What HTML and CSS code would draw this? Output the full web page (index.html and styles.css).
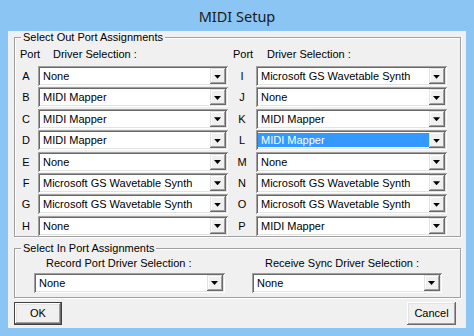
FILE: index.html
```html
<!DOCTYPE html>
<html lang="en">
<head>
  <meta charset="UTF-8" />
  <title>MIDI Setup</title>
  <link rel="stylesheet" href="styles.css">
</head>
<body>

  <div class="window">
    <div class="titlebar">MIDI Setup</div>

    <div class="client">

      <div class="group out-group">
        <span class="legend">Select Out Port Assignments</span>
        <div class="port-grid">
          <div class="head head-left"><span class="port-lbl">Port</span>Driver Selection :</div>
          <div class="head head-right"><span class="port-lbl">Port</span>Driver Selection :</div>

          <div class="letter">A</div>
          <div class="combo"><span class="value">None</span><span class="drop"><i></i></span></div>
          <div class="letter right">I</div>
          <div class="combo"><span class="value">Microsoft GS Wavetable Synth</span><span class="drop"><i></i></span></div>

          <div class="letter">B</div>
          <div class="combo"><span class="value">MIDI Mapper</span><span class="drop"><i></i></span></div>
          <div class="letter right">J</div>
          <div class="combo"><span class="value">None</span><span class="drop"><i></i></span></div>

          <div class="letter">C</div>
          <div class="combo"><span class="value">MIDI Mapper</span><span class="drop"><i></i></span></div>
          <div class="letter right">K</div>
          <div class="combo"><span class="value">MIDI Mapper</span><span class="drop"><i></i></span></div>

          <div class="letter">D</div>
          <div class="combo"><span class="value">MIDI Mapper</span><span class="drop"><i></i></span></div>
          <div class="letter right">L</div>
          <div class="combo focused"><span class="value">MIDI Mapper</span><span class="drop"><i></i></span></div>

          <div class="letter">E</div>
          <div class="combo"><span class="value">None</span><span class="drop"><i></i></span></div>
          <div class="letter right">M</div>
          <div class="combo"><span class="value">None</span><span class="drop"><i></i></span></div>

          <div class="letter">F</div>
          <div class="combo"><span class="value">Microsoft GS Wavetable Synth</span><span class="drop"><i></i></span></div>
          <div class="letter right">N</div>
          <div class="combo"><span class="value">Microsoft GS Wavetable Synth</span><span class="drop"><i></i></span></div>

          <div class="letter">G</div>
          <div class="combo"><span class="value">Microsoft GS Wavetable Synth</span><span class="drop"><i></i></span></div>
          <div class="letter right">O</div>
          <div class="combo"><span class="value">Microsoft GS Wavetable Synth</span><span class="drop"><i></i></span></div>

          <div class="letter">H</div>
          <div class="combo"><span class="value">None</span><span class="drop"><i></i></span></div>
          <div class="letter right">P</div>
          <div class="combo"><span class="value">MIDI Mapper</span><span class="drop"><i></i></span></div>
        </div>
      </div>

      <div class="group in-group">
        <span class="legend">Select In Port Assignments</span>
        <div class="in-grid">
          <div class="in-col">
            <div class="in-label">Record Port Driver Selection :</div>
            <div class="combo"><span class="value">None</span><span class="drop"><i></i></span></div>
          </div>
          <div class="in-col">
            <div class="in-label in-label-right">Receive Sync Driver Selection :</div>
            <div class="combo"><span class="value">None</span><span class="drop"><i></i></span></div>
          </div>
        </div>
      </div>

      <div class="actions">
        <button class="btn default">OK</button>
        <button class="btn cancel">Cancel</button>
      </div>

    </div>
  </div>

</body>
</html>
```

FILE: styles.css
```css
body {
  margin: 0;
  background: #8bc5f4;
  font-family: "Liberation Sans", Arial, sans-serif;
  font-size: 11px;
  color: #000;
}

.window {
  width: 474px;
  height: 336px;
  background: #8bc5f4;
}

.titlebar {
  height: 31px;
  line-height: 32px;
  text-align: center;
  font-family: "Noto Sans", "Open Sans", sans-serif;
  font-size: 14.5px;
  color: #1a1a1a;
}

.client {
  margin: 0 8px;
  height: 297px;
  box-sizing: border-box;
  background: #f0f0f0;
  padding: 0 5px 0 6px;
  display: flex;
  flex-direction: column;
}

.group {
  position: relative;
  width: 447px;
  box-sizing: border-box;
  border: 1px solid #a0a0a0;
  box-shadow: inset 1px 1px 0 #fff, 1px 1px 0 #fff;
}

.legend {
  position: absolute;
  top: -7px;
  left: 6px;
  padding: 0 2px;
  line-height: 13px;
  background: #f0f0f0;
}

.out-group {
  margin-top: 6px;
  padding: 9.5px 12px 0.5px 3px;
}

.port-grid {
  display: grid;
  grid-template-columns: 20px 190px 28px 191px;
  grid-template-rows: 17.3px;
  grid-auto-rows: 20px;
  row-gap: 1.35px;
}

.head {
  line-height: 13px;
  white-space: nowrap;
}

.head-left {
  grid-column: 1 / 3;
  padding-left: 2px;
}

.head-right {
  grid-column: 3 / 5;
  padding-left: 5px;
}

.port-lbl {
  display: inline-block;
  width: 33px;
}

.head-right .port-lbl {
  width: 34px;
}

.letter {
  line-height: 20px;
  text-align: center;
  padding-right: 4px;
}

.letter.right {
  padding-right: 0;
}

.combo {
  height: 20px;
  box-sizing: border-box;
  padding: 2px;
  display: flex;
  background: #fff;
  box-shadow: inset 1px 1px 0 #a0a0a0, inset -1px -1px 0 #fff, inset 2px 2px 0 #696969, inset -2px -2px 0 #e3e3e3;
}

.value {
  flex: 1;
  margin: 1px 0;
  padding-left: 3px;
  line-height: 14px;
  white-space: nowrap;
  overflow: hidden;
}

.focused .value {
  background: #3399ff;
  color: #fff;
}

.drop {
  width: 16px;
  height: 16px;
  box-sizing: border-box;
  background: #f0f0f0;
  box-shadow: inset -1px -1px 0 #696969, inset 1px 1px 0 #e3e3e3, inset -2px -2px 0 #a0a0a0, inset 2px 2px 0 #fff;
  display: flex;
  align-items: center;
  justify-content: center;
}

.drop i {
  width: 7px;
  height: 4px;
  margin: 1px 1px 0 0;
  background: #000;
  clip-path: polygon(0 0, 100% 0, 50% 100%);
}

.in-group {
  margin-top: 10.5px;
  padding: 8.5px 0 4px 19px;
}

.in-grid {
  display: grid;
  grid-template-columns: 191px 190px;
  column-gap: 27px;
}

.in-label {
  line-height: 13px;
  padding-left: 12px;
  margin-bottom: 2.5px;
  white-space: nowrap;
}

.in-label-right {
  padding-left: 13px;
}

.actions {
  display: flex;
  justify-content: space-between;
  margin-top: 4px;
  padding-right: 5px;
}

.btn {
  height: 23px;
  padding: 0;
  font-family: "Liberation Sans", Arial, sans-serif;
  font-size: 11px;
  color: #000;
  background: #f0f0f0;
  border: none;
  box-shadow: inset -1px -1px 0 #696969, inset 1px 1px 0 #fff, inset -2px -2px 0 #a0a0a0, inset 2px 2px 0 #e3e3e3;
}

.default {
  width: 48px;
  border: 1px solid #404040;
}

.cancel {
  width: 49px;
}
```
